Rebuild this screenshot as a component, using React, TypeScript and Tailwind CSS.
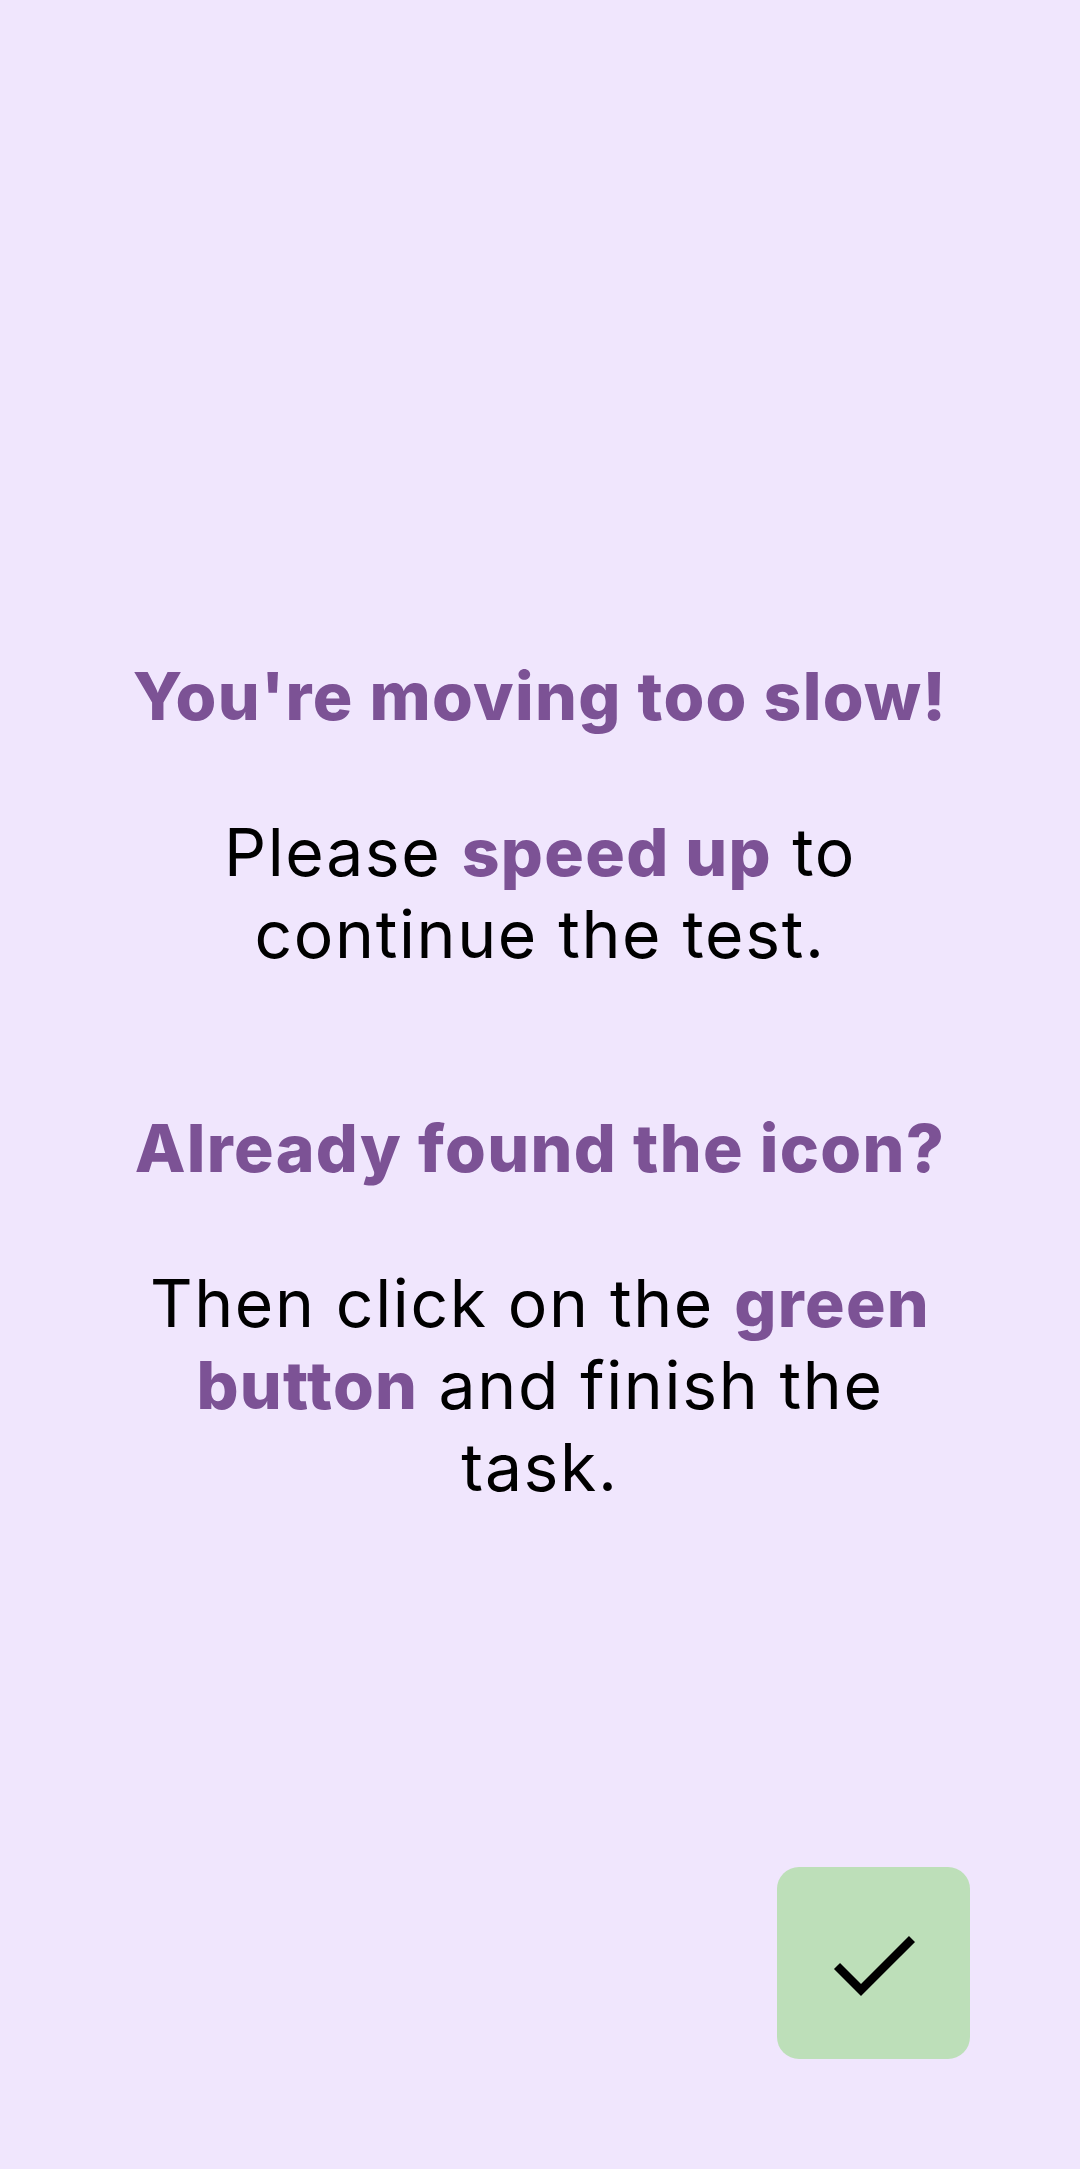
import React from "react";

const font = { fontFamily: "Inter, 'Noto Sans', sans-serif" };

function CheckButton() {
  return (
    <button className="w-[193px] h-[192px] rounded-[22px] bg-[#bddfb9] flex items-center justify-center">
      <svg width="193" height="192" viewBox="0 0 193 192" fill="none">
        <polyline
          points="60,99 84,123 135,72"
          stroke="#000"
          strokeWidth="8.5"
          strokeLinecap="butt"
          strokeLinejoin="miter"
        />
      </svg>
    </button>
  );
}

export default function App() {
  return (
    <div
      className="h-[2169px] w-[1080px] bg-[#f0e6fd] flex flex-col text-black"
      style={font}
    >
      <div className="pt-[655px] px-[125px] flex flex-col items-center text-center text-[66px] leading-[82px]">
        <h1 className="font-extrabold text-[#7c5295] whitespace-nowrap tracking-[0.02em]">You're moving too slow!</h1>
        <p className="mt-[74px] tracking-[0.025em]">
          Please <span className="font-extrabold text-[#7c5295] tracking-[0.02em]">speed up</span> to continue the test.
        </p>
        <h2 className="mt-[132px] font-extrabold text-[#7c5295] whitespace-nowrap tracking-[0.02em]">Already found the icon?</h2>
        <p className="mt-[73px] tracking-[0.025em]">
          Then click on the <span className="font-extrabold text-[#7c5295] tracking-[0.02em]">green button</span> and finish the task.
        </p>
      </div>
      <div className="mt-auto flex justify-end pr-[110px] pb-[110px]">
        <CheckButton />
      </div>
    </div>
  );
}
